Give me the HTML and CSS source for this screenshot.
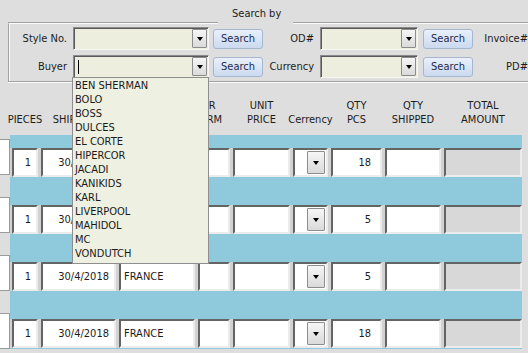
FILE: index.html
```html
<!DOCTYPE html>
<html lang="en">
<head>
  <meta charset="UTF-8">
  <title>Order Entry</title>
  <link rel="stylesheet" href="styles.css">
</head>
<body>
  <div class="searchbox">
    <div class="searchbox-top">
      <span class="line first"></span>
      <span class="title">Search by</span>
      <span class="line grow"></span>
    </div>
    <div class="searchbox-body">
      <label class="lbl">Style No.</label>
      <div class="combo wide"><span class="value"></span><span class="drop"></span></div>
      <button class="btn">Search</button>
      <label class="lbl">OD#</label>
      <div class="combo"><span class="value"></span><span class="drop"></span></div>
      <button class="btn">Search</button>
      <label class="lbl far">Invoice#</label>

      <label class="lbl">Buyer</label>
      <div class="combo wide open"><span class="value"><span class="caret"></span></span><span class="drop"></span>
        <ul class="droplist">
          <li>BEN SHERMAN</li>
          <li>BOLO</li>
          <li>BOSS</li>
          <li>DULCES</li>
          <li>EL CORTE</li>
          <li>HIPERCOR</li>
          <li>JACADI</li>
          <li>KANIKIDS</li>
          <li>KARL</li>
          <li>LIVERPOOL</li>
          <li>MAHIDOL</li>
          <li>MC</li>
          <li>VONDUTCH</li>
        </ul>
      </div>
      <button class="btn">Search</button>
      <label class="lbl">Currency</label>
      <div class="combo"><span class="value"></span><span class="drop"></span></div>
      <button class="btn">Search</button>
      <label class="lbl far">PD#</label>
    </div>
  </div>

  <div class="heads">
    <div class="head">PIECES</div>
    <div class="head">SHIP DATE</div>
    <div class="head">COUNTRY</div>
    <div class="head term">ORDER<br>PAY TERM</div>
    <div class="head">UNIT<br>PRICE</div>
    <div class="head">Cerrency</div>
    <div class="head">QTY<br>PCS</div>
    <div class="head">QTY<br>SHIPPED</div>
    <div class="head">TOTAL<br>AMOUNT</div>
  </div>

  <div class="sheet">
    <div class="side">
      <div class="side-cell"></div>
      <div class="side-cell"></div>
      <div class="side-cell"></div>
      <div class="side-cell"></div>
    </div>
    <div class="rows">
      <div class="row">
        <div class="cell num">1</div>
        <div class="cell num">30/4/2018</div>
        <div class="cell">FRANCE</div>
        <div class="cell"></div>
        <div class="cell"></div>
        <div class="cell cur"><span class="drop"></span></div>
        <div class="cell qty">18</div>
        <div class="cell"></div>
        <div class="cell total"></div>
      </div>
      <div class="row">
        <div class="cell num">1</div>
        <div class="cell num">30/4/2018</div>
        <div class="cell">FRANCE</div>
        <div class="cell"></div>
        <div class="cell"></div>
        <div class="cell cur"><span class="drop"></span></div>
        <div class="cell qty">5</div>
        <div class="cell"></div>
        <div class="cell total"></div>
      </div>
      <div class="row">
        <div class="cell num">1</div>
        <div class="cell num">30/4/2018</div>
        <div class="cell">FRANCE</div>
        <div class="cell"></div>
        <div class="cell"></div>
        <div class="cell cur"><span class="drop"></span></div>
        <div class="cell qty">5</div>
        <div class="cell"></div>
        <div class="cell total"></div>
      </div>
      <div class="row">
        <div class="cell num">1</div>
        <div class="cell num">30/4/2018</div>
        <div class="cell">FRANCE</div>
        <div class="cell"></div>
        <div class="cell"></div>
        <div class="cell cur"><span class="drop"></span></div>
        <div class="cell qty">18</div>
        <div class="cell"></div>
        <div class="cell total"></div>
      </div>
    </div>
  </div>
</body>
</html>
```

FILE: styles.css
```css
:root {
  --window-bg: #dedede;
  --band: #8ecadc;
  --field-bg: #eeeedf;
  --list-bg: #eef0e1;
}

* {
  margin: 0;
  padding: 0;
  box-sizing: border-box;
}

body {
  width: 528px;
  height: 353px;
  overflow: hidden;
  background-color: var(--window-bg);
  font-family: "DejaVu Sans Condensed", "DejaVu Sans", sans-serif;
  font-stretch: condensed;
  font-size: 11px;
  line-height: 14px;
  color: #1c1c1c;
}

/* Search group */
.searchbox {
  margin-left: 8px;
  width: 540px;
}

.searchbox-top {
  display: flex;
  height: 24px;
  align-items: flex-end;
}

.line {
  height: 2px;
  border-top: 1px solid #a2a2a2;
  border-bottom: 1px solid #fafafa;
}

.line.first {
  width: 210px;
  border-left: 1px solid #a2a2a2;
}

.line.grow {
  flex: 1;
}

.title {
  align-self: flex-start;
  padding: 7px 12px 0 14px;
}

.searchbox-body {
  border-left: 1px solid #a2a2a2;
  border-bottom: 1px solid #a2a2a2;
  box-shadow: inset 1px 0 0 #fafafa, 0 1px 0 #fafafa;
  padding: 3px 0 3px 1px;
  display: grid;
  grid-template-columns: 63px 140px 54px 53px 103px 60px 45px;
  grid-auto-rows: 23px;
  row-gap: 5px;
  align-items: center;
}

.lbl {
  text-align: right;
  padding-right: 6px;
  white-space: nowrap;
}

.lbl.far {
  padding-right: 0;
}

.combo {
  position: relative;
  display: flex;
  width: 98px;
  height: 23px;
  background-color: var(--field-bg);
  border: 1px solid;
  border-color: #8a8a8a #f6f6f6 #f6f6f6 #8a8a8a;
  box-shadow: inset 1px 1px 0 #5a5a5a;
  padding: 1px 1px 1px 2px;
}

.combo.wide {
  width: 136px;
}

.combo .value {
  flex: 1;
  display: flex;
  align-items: center;
  padding-left: 2px;
}

.caret {
  width: 1px;
  height: 14px;
  background-color: #000;
}

.drop {
  width: 15px;
  border: 1px solid #8c8c8c;
  border-radius: 1px;
  background: linear-gradient(#f6f6f6, #dadada);
  display: flex;
  align-items: center;
  justify-content: center;
}

.drop::after {
  content: "";
  border-left: 3px solid transparent;
  border-right: 3px solid transparent;
  border-top: 4px solid #000;
  margin-top: 1px;
}

.btn {
  width: 50px;
  height: 20px;
  font: inherit;
  color: #1e2c4c;
  border: 1px solid #a7b6cf;
  border-radius: 3px;
  background: linear-gradient(#e9f0fb, #cbd9ef);
}

/* Column headers */
.heads {
  display: grid;
  grid-template-columns: 26px 75px 76px 32px 57px 35px 51px 56px 78px;
  column-gap: 3px;
  height: 53px;
  padding: 19px 0 0 12px;
  align-content: start;
  text-align: center;
  white-space: nowrap;
}

.head {
  height: 28px;
  display: flex;
  align-items: flex-end;
  justify-content: center;
  padding-bottom: 2px;
}

.head.term {
  padding-right: 40px;
}

/* Data sheet */
.sheet {
  display: flex;
}

.side {
  width: 10px;
  display: flex;
  flex-direction: column;
  gap: 22px;
  padding-top: 4px;
}

.side-cell {
  height: 36px;
  background-color: #fff;
  border: 1px solid #9a9a9a;
  border-left: none;
}

.rows {
  width: 512px;
  background-color: var(--band);
  padding-top: 13px;
  display: flex;
  flex-direction: column;
  gap: 28px;
}

.row {
  display: grid;
  grid-template-columns: 26px 75px 76px 32px 57px 35px 51px 56px 78px;
  column-gap: 3px;
  padding-left: 2px;
  height: 29px;
  background-color: #d2d2d2;
}

.cell {
  background-color: #fff;
  border: 2px solid;
  border-color: #646464 #ececec #ececec #646464;
  padding: 0 3px;
  display: flex;
  align-items: center;
  white-space: nowrap;
  overflow: hidden;
}

.cell.num {
  justify-content: flex-end;
  padding-right: 5px;
}

.cell.qty {
  justify-content: flex-end;
  padding-right: 9px;
}

.cell.cur {
  justify-content: flex-end;
  padding: 1px 1px 1px 0;
}

.cell.cur .drop {
  width: 18px;
  height: 100%;
}

.cell.total {
  background-color: #d8d8d8;
}

/* Open dropdown list */
.droplist {
  position: absolute;
  left: -2px;
  top: 21px;
  width: 137px;
  list-style: none;
  background-color: var(--list-bg);
  border: 1px solid #8e8e8e;
  padding: 1px 0 2px 2px;
  z-index: 5;
  color: #1a1a1a;
}

.droplist li {
  height: 14px;
  line-height: 14px;
}
```
